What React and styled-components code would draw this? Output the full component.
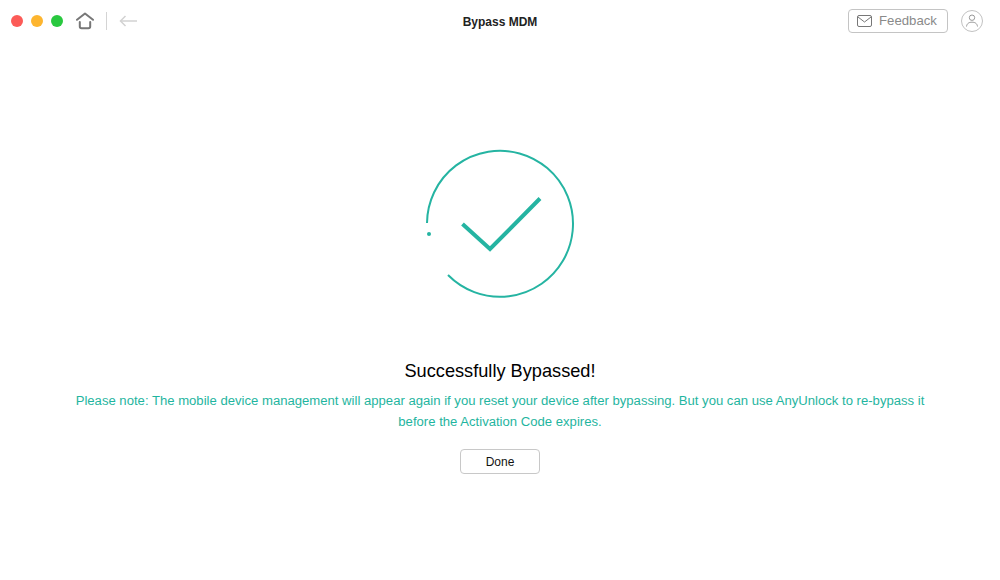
import styled, { createGlobalStyle } from "styled-components";

const Global = createGlobalStyle`
html, body {
  margin: 0;
  padding: 0;
  background: #fff;
}
body {
  font-family: "Liberation Sans", Arial, sans-serif;
}
`;

const Window = styled.div`
  width: 1000px;
  height: 580px;
  display: flex;
  flex-direction: column;
  overflow: hidden;
  background: #fff;
`;

const TitleBar = styled.div`
  height: 44px;
  display: grid;
  grid-template-columns: 1fr auto 1fr;
  align-items: center;
`;

const Left = styled.div`
  display: flex;
  align-items: center;
  padding: 0 0 3px 11px;
`;

const Right = styled.div`
  display: flex;
  align-items: center;
  justify-content: flex-end;
  padding: 0 17px 3px 0;
`;

const Light = styled.span`
  width: 12px;
  height: 12px;
  border-radius: 50%;
  background: ${(p) => p.$color};
  margin-right: 8px;
`;

const Divider = styled.span`
  width: 1px;
  height: 18px;
  background: #d4d4d4;
  margin: 0 12px;
`;

const Title = styled.div`
  font-size: 12px;
  font-weight: 700;
  color: #222;
`;

const FeedbackButton = styled.button`
  width: 100px;
  height: 24px;
  box-sizing: border-box;
  border: 1px solid #c4c4c4;
  border-radius: 4px;
  background: #fff;
  padding: 0 0 0 8px;
  display: flex;
  align-items: center;
  gap: 7px;
  font: 13.2px "Liberation Sans", Arial, sans-serif;
  color: #8a8a8a;
  margin-right: 13px;
`;

const Content = styled.div`
  flex: 1;
  display: flex;
  flex-direction: column;
  align-items: center;
  padding-top: 100px;
`;

const Heading = styled.h1`
  margin: 56px 0 0;
  font-size: 18.2px;
  line-height: 22px;
  font-weight: 400;
  color: #000;
`;

const Note = styled.p`
  margin: 8px 0 0;
  width: 860px;
  text-align: center;
  font-size: 13.12px;
  line-height: 21px;
  color: #1fb5a0;
`;

const DoneButton = styled.button`
  margin-top: 17px;
  width: 80px;
  height: 25px;
  box-sizing: border-box;
  border: 1px solid #c8c8c8;
  border-radius: 4px;
  background: #fff;
  font: 12px "Liberation Sans", Arial, sans-serif;
  color: #111;
`;

const HomeSvg = styled.svg`
  margin-left: 5px;
`;

const HomeIcon = () => (
  <HomeSvg width="18" height="18" viewBox="0 0 18 18" fill="none" stroke="#777" strokeWidth="2">
    <path d="M1 7.8 L9 1.5 L17 7.8" strokeLinecap="round" strokeLinejoin="round" />
    <path d="M3.8 10 V14.5 Q3.8 16.3 5.6 16.3 H12.4 Q14.2 16.3 14.2 14.5 V10" strokeLinecap="round" />
  </HomeSvg>
);

const BackIcon = () => (
  <svg width="18" height="12" viewBox="0 0 18 12" fill="none" stroke="#d2d2d2" strokeWidth="1.5">
    <path d="M18 6 H2" />
    <path d="M6.5 1 L1.5 6 L6.5 11" />
  </svg>
);

const MailIcon = () => (
  <svg width="15" height="12" viewBox="0 0 15 12" fill="none" stroke="#777" strokeWidth="1">
    <rect x="0.5" y="0.5" width="14" height="11" rx="1.5" />
    <path d="M1 2 L7.5 7 L14 2" />
  </svg>
);

const UserIcon = () => (
  <svg width="22" height="22" viewBox="0 0 22 22" fill="none" stroke="#999" strokeWidth="1">
    <circle cx="11" cy="11" r="10.5" stroke="#c2c2c2" />
    <circle cx="11" cy="7.7" r="2.7" />
    <path d="M5.5 16.5 C6 13 8.5 12.2 11 12.2 C13.5 12.2 16 13 16.5 16.5" />
  </svg>
);

const SuccessMark = () => (
  <svg width="160" height="160" viewBox="0 0 160 160" fill="none" stroke="#25b4a2">
    <path d="M7 79 A73 73 0 1 1 28 131" strokeWidth="2" />
    <circle cx="9" cy="90" r="2" fill="#25b4a2" stroke="none" />
    <path d="M42.5 80 L70 105 L120 54.5" strokeWidth="4" />
  </svg>
);

export default function App() {
  return (
    <Window>
      <Global />
      <TitleBar>
        <Left>
          <Light $color="#fc5b57" />
          <Light $color="#fdb52f" />
          <Light $color="#29c83f" />
          <HomeIcon />
          <Divider />
          <BackIcon />
        </Left>
        <Title>Bypass MDM</Title>
        <Right>
          <FeedbackButton>
            <MailIcon />
            Feedback
          </FeedbackButton>
          <UserIcon />
        </Right>
      </TitleBar>
      <Content>
        <SuccessMark />
        <Heading>Successfully Bypassed!</Heading>
        <Note>
          Please note: The mobile device management will appear again if you reset your device after bypassing. But you can use AnyUnlock to re-bypass it before the Activation Code expires.
        </Note>
        <DoneButton>Done</DoneButton>
      </Content>
    </Window>
  );
}
